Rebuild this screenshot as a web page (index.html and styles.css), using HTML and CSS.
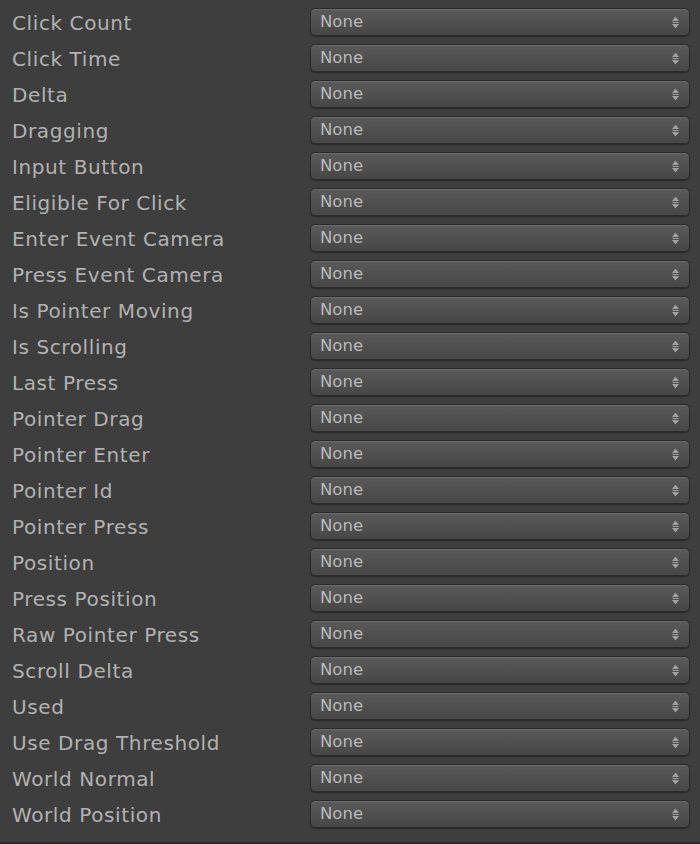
FILE: index.html
```html
<!DOCTYPE html>
<html>
<head>
<meta charset="utf-8">
<link rel="stylesheet" href="styles.css">
</head>
<body>
<div class="panel">
  <div class="row"><span class="label">Click Count</span><div class="select"><span class="value">None</span><svg class="arrows" viewBox="0 0 7 13"><path d="M3.5 0.5 L7 5 H0 Z M0 8 H7 L3.5 12.5 Z" /><rect x="0.5" y="6" width="6" height="1"/></svg></div></div>
  <div class="row"><span class="label">Click Time</span><div class="select"><span class="value">None</span><svg class="arrows" viewBox="0 0 7 13"><path d="M3.5 0.5 L7 5 H0 Z M0 8 H7 L3.5 12.5 Z" /><rect x="0.5" y="6" width="6" height="1"/></svg></div></div>
  <div class="row"><span class="label">Delta</span><div class="select"><span class="value">None</span><svg class="arrows" viewBox="0 0 7 13"><path d="M3.5 0.5 L7 5 H0 Z M0 8 H7 L3.5 12.5 Z" /><rect x="0.5" y="6" width="6" height="1"/></svg></div></div>
  <div class="row"><span class="label">Dragging</span><div class="select"><span class="value">None</span><svg class="arrows" viewBox="0 0 7 13"><path d="M3.5 0.5 L7 5 H0 Z M0 8 H7 L3.5 12.5 Z" /><rect x="0.5" y="6" width="6" height="1"/></svg></div></div>
  <div class="row"><span class="label">Input Button</span><div class="select"><span class="value">None</span><svg class="arrows" viewBox="0 0 7 13"><path d="M3.5 0.5 L7 5 H0 Z M0 8 H7 L3.5 12.5 Z" /><rect x="0.5" y="6" width="6" height="1"/></svg></div></div>
  <div class="row"><span class="label">Eligible For Click</span><div class="select"><span class="value">None</span><svg class="arrows" viewBox="0 0 7 13"><path d="M3.5 0.5 L7 5 H0 Z M0 8 H7 L3.5 12.5 Z" /><rect x="0.5" y="6" width="6" height="1"/></svg></div></div>
  <div class="row"><span class="label">Enter Event Camera</span><div class="select"><span class="value">None</span><svg class="arrows" viewBox="0 0 7 13"><path d="M3.5 0.5 L7 5 H0 Z M0 8 H7 L3.5 12.5 Z" /><rect x="0.5" y="6" width="6" height="1"/></svg></div></div>
  <div class="row"><span class="label">Press Event Camera</span><div class="select"><span class="value">None</span><svg class="arrows" viewBox="0 0 7 13"><path d="M3.5 0.5 L7 5 H0 Z M0 8 H7 L3.5 12.5 Z" /><rect x="0.5" y="6" width="6" height="1"/></svg></div></div>
  <div class="row"><span class="label">Is Pointer Moving</span><div class="select"><span class="value">None</span><svg class="arrows" viewBox="0 0 7 13"><path d="M3.5 0.5 L7 5 H0 Z M0 8 H7 L3.5 12.5 Z" /><rect x="0.5" y="6" width="6" height="1"/></svg></div></div>
  <div class="row"><span class="label">Is Scrolling</span><div class="select"><span class="value">None</span><svg class="arrows" viewBox="0 0 7 13"><path d="M3.5 0.5 L7 5 H0 Z M0 8 H7 L3.5 12.5 Z" /><rect x="0.5" y="6" width="6" height="1"/></svg></div></div>
  <div class="row"><span class="label">Last Press</span><div class="select"><span class="value">None</span><svg class="arrows" viewBox="0 0 7 13"><path d="M3.5 0.5 L7 5 H0 Z M0 8 H7 L3.5 12.5 Z" /><rect x="0.5" y="6" width="6" height="1"/></svg></div></div>
  <div class="row"><span class="label">Pointer Drag</span><div class="select"><span class="value">None</span><svg class="arrows" viewBox="0 0 7 13"><path d="M3.5 0.5 L7 5 H0 Z M0 8 H7 L3.5 12.5 Z" /><rect x="0.5" y="6" width="6" height="1"/></svg></div></div>
  <div class="row"><span class="label">Pointer Enter</span><div class="select"><span class="value">None</span><svg class="arrows" viewBox="0 0 7 13"><path d="M3.5 0.5 L7 5 H0 Z M0 8 H7 L3.5 12.5 Z" /><rect x="0.5" y="6" width="6" height="1"/></svg></div></div>
  <div class="row"><span class="label">Pointer Id</span><div class="select"><span class="value">None</span><svg class="arrows" viewBox="0 0 7 13"><path d="M3.5 0.5 L7 5 H0 Z M0 8 H7 L3.5 12.5 Z" /><rect x="0.5" y="6" width="6" height="1"/></svg></div></div>
  <div class="row"><span class="label">Pointer Press</span><div class="select"><span class="value">None</span><svg class="arrows" viewBox="0 0 7 13"><path d="M3.5 0.5 L7 5 H0 Z M0 8 H7 L3.5 12.5 Z" /><rect x="0.5" y="6" width="6" height="1"/></svg></div></div>
  <div class="row"><span class="label">Position</span><div class="select"><span class="value">None</span><svg class="arrows" viewBox="0 0 7 13"><path d="M3.5 0.5 L7 5 H0 Z M0 8 H7 L3.5 12.5 Z" /><rect x="0.5" y="6" width="6" height="1"/></svg></div></div>
  <div class="row"><span class="label">Press Position</span><div class="select"><span class="value">None</span><svg class="arrows" viewBox="0 0 7 13"><path d="M3.5 0.5 L7 5 H0 Z M0 8 H7 L3.5 12.5 Z" /><rect x="0.5" y="6" width="6" height="1"/></svg></div></div>
  <div class="row"><span class="label">Raw Pointer Press</span><div class="select"><span class="value">None</span><svg class="arrows" viewBox="0 0 7 13"><path d="M3.5 0.5 L7 5 H0 Z M0 8 H7 L3.5 12.5 Z" /><rect x="0.5" y="6" width="6" height="1"/></svg></div></div>
  <div class="row"><span class="label">Scroll Delta</span><div class="select"><span class="value">None</span><svg class="arrows" viewBox="0 0 7 13"><path d="M3.5 0.5 L7 5 H0 Z M0 8 H7 L3.5 12.5 Z" /><rect x="0.5" y="6" width="6" height="1"/></svg></div></div>
  <div class="row"><span class="label">Used</span><div class="select"><span class="value">None</span><svg class="arrows" viewBox="0 0 7 13"><path d="M3.5 0.5 L7 5 H0 Z M0 8 H7 L3.5 12.5 Z" /><rect x="0.5" y="6" width="6" height="1"/></svg></div></div>
  <div class="row"><span class="label">Use Drag Threshold</span><div class="select"><span class="value">None</span><svg class="arrows" viewBox="0 0 7 13"><path d="M3.5 0.5 L7 5 H0 Z M0 8 H7 L3.5 12.5 Z" /><rect x="0.5" y="6" width="6" height="1"/></svg></div></div>
  <div class="row"><span class="label">World Normal</span><div class="select"><span class="value">None</span><svg class="arrows" viewBox="0 0 7 13"><path d="M3.5 0.5 L7 5 H0 Z M0 8 H7 L3.5 12.5 Z" /><rect x="0.5" y="6" width="6" height="1"/></svg></div></div>
  <div class="row"><span class="label">World Position</span><div class="select"><span class="value">None</span><svg class="arrows" viewBox="0 0 7 13"><path d="M3.5 0.5 L7 5 H0 Z M0 8 H7 L3.5 12.5 Z" /><rect x="0.5" y="6" width="6" height="1"/></svg></div></div>
</div>
<div class="footer"></div>
</body>
</html>
```
FILE: styles.css
```css
html, body {
  margin: 0;
  padding: 0;
  background: #2b2b2b;
}
body {
  width: 700px;
  height: 844px;
  overflow: hidden;
  font-family: "DejaVu Sans", "Liberation Sans", sans-serif;
}
.panel {
  background: #3e3e3e;
  height: 842px;
  padding-top: 8px;
  box-sizing: border-box;
}
.row {
  height: 36px;
  display: flex;
  align-items: flex-start;
}
.label {
  width: 310px;
  padding-left: 12px;
  padding-top: 1px;
  box-sizing: border-box;
  color: #b2b2b2;
  font-size: 20px;
  line-height: 28px;
  letter-spacing: 0.6px;
  white-space: nowrap;
}
.select {
  width: 380px;
  height: 28px;
  box-sizing: border-box;
  border: 1px solid #2a2a2a;
  border-radius: 5px;
  background: linear-gradient(#5a5a5a, #474747);
  box-shadow: inset 0 1px 0 #6c6c6c, 0 1px 1px rgba(0,0,0,0.35);
  display: flex;
  align-items: center;
  justify-content: space-between;
  padding: 0 10px 0 9px;
}
.value {
  color: #b9b9b9;
  font-size: 16.5px;
  line-height: 26px;
}
.arrows {
  width: 7px;
  height: 13px;
  fill: #a0a0a0;
}
.footer {
  height: 2px;
  background: #2b2b2b;
}
```
